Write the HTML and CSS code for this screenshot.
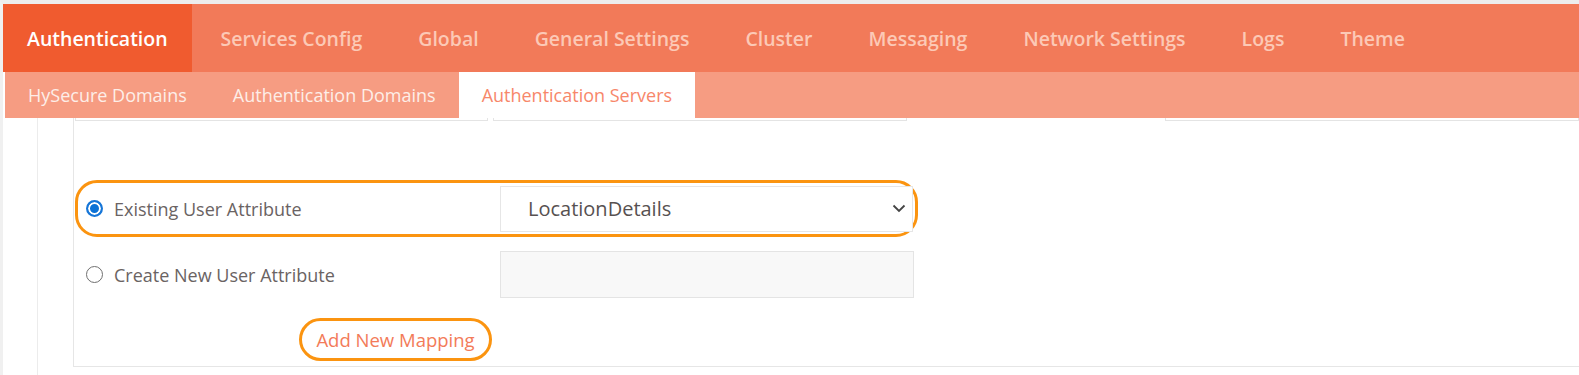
FILE: index.html
```html
<!DOCTYPE html>
<html lang="en">
<head>
<meta charset="utf-8">
<title>Authentication Servers</title>
<link rel="stylesheet" href="styles.css">
</head>
<body>
<div class="page">
  <nav class="mainnav">
    <a class="tab active">Authentication</a>
    <a class="tab">Services Config</a>
    <a class="tab">Global</a>
    <a class="tab">General Settings</a>
    <a class="tab">Cluster</a>
    <a class="tab">Messaging</a>
    <a class="tab">Network Settings</a>
    <a class="tab">Logs</a>
    <a class="tab">Theme</a>
  </nav>
  <nav class="subnav">
    <a class="subtab">HySecure Domains</a>
    <a class="subtab">Authentication Domains</a>
    <a class="subtab active">Authentication Servers</a>
  </nav>
  <div class="content">
    <div class="rail">
      <div class="card">
        <div class="stubs">
          <span class="stub s1"></span>
          <span class="stub s2"></span>
          <span class="stub s3"></span>
        </div>
        <div class="row highlight">
          <label class="opt">
            <span class="radio checked"></span>
            <span class="optlabel">Existing User Attribute</span>
          </label>
          <div class="select">
            <span class="selval">LocationDetails</span>
            <svg class="chev" width="14" height="9" viewBox="0 0 14 9"><polyline points="1.5,1.5 7,7 12.5,1.5" fill="none" stroke="#444" stroke-width="1.8"/></svg>
          </div>
        </div>
        <div class="row plain">
          <label class="opt">
            <span class="radio"></span>
            <span class="optlabel">Create New User Attribute</span>
          </label>
          <div class="textbox"></div>
        </div>
        <button class="addbtn">Add New Mapping</button>
      </div>
    </div>
  </div>
</div>
</body>
</html>
```
FILE: styles.css
```css
* { box-sizing: border-box; }
html, body { margin: 0; padding: 0; background: #fff; }
body { font-family: "Open Sans", "Noto Sans", sans-serif; }
.page {
  height: 375px;
  overflow: hidden;
  border-top: 4px solid #ededed;
  border-left: 3px solid #f0f0f0;
}
.mainnav {
  display: flex;
  height: 68px;
  background: #f27a59;
  gap: 8px;
}
.tab {
  display: flex;
  align-items: center;
  padding: 0 24px;
  font-size: 19.5px;
  font-weight: 600;
  color: #fcc9b6;
  white-space: nowrap;
}
.tab.active { background: #f05b2f; color: #fff; margin-right: -3px; }
.subnav {
  display: flex;
  height: 46px;
  margin-left: 2px;
  background: #f69c82;
}
.subtab {
  display: flex;
  align-items: center;
  padding: 0 23px;
  font-size: 18px;
  color: #fdeee8;
  white-space: nowrap;
}
.subtab.active { background: #fff; color: #f7876a; }
.content { height: 300px; }
.rail {
  height: 100%;
  margin-left: 34px;
  border-left: 1px solid #ececec;
  padding-left: 35px;
}
.card {
  border-left: 1px solid #e6e6e6;
  border-bottom: 1px solid #e6e6e6;
  padding-bottom: 5px;
}
.stubs { display: flex; height: 3px; }
.stub { height: 3px; border: 1px solid #e4e4e4; border-top: none; }
.s1 { margin-left: 1px; width: 413px; }
.s2 { margin-left: 5px; width: 414px; }
.s3 { margin-left: 258px; flex: 1; }
.row {
  display: flex;
  align-items: center;
  width: 843px;
  height: 57px;
  margin-left: 1px;
  border: 3px solid transparent;
  border-radius: 22px;
  padding-left: 8px;
}
.row.highlight { margin-top: 59px; border-color: #fb9410; }
.row.plain { margin-top: 9px; }
.opt { display: flex; align-items: center; width: 414px; gap: 11px; }
.radio {
  width: 17px; height: 17px;
  border-radius: 50%;
  border: 1.5px solid #6f6f6f;
  flex: none;
  background: #fff;
}
.radio.checked {
  border: 2px solid #1676d8;
  box-shadow: inset 0 0 0 2px #fff, inset 0 0 0 7px #0b72d6;
  background: #0b72d6;
}
.optlabel { font-size: 18px; color: #6a6363; }
.select {
  display: flex;
  align-items: center;
  justify-content: space-between;
  width: 413px;
  height: 46px;
  border: 1px solid #e6e6e6;
  background: #fff;
  padding: 0 6px 0 27px;
}
.selval { font-size: 20px; color: #575151; }
.chev { display: block; }
.textbox {
  width: 414px;
  height: 47px;
  border: 1px solid #e4e4e4;
  background: #f8f8f8;
}
.addbtn {
  display: block;
  margin: 15px 0 0 225px;
  width: 193px;
  height: 43px;
  border: 3px solid #fb9410;
  border-radius: 22px;
  background: #fff;
  font-family: "Open Sans", "Noto Sans", sans-serif;
  font-size: 18.5px;
  color: #f37b59;
  padding: 0;
}
```
